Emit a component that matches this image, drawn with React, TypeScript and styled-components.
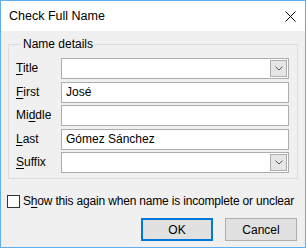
import React from "react";
import styled, { createGlobalStyle } from "styled-components";

const GlobalStyle = createGlobalStyle`
  html, body {
    margin: 0;
    padding: 0;
    background: #ffffff;
  }
  * {
    box-sizing: border-box;
  }
`;

const Window = styled.div`
  width: 306px;
  height: 248px;
  border: 1px solid #62aeea;
  background-color: #f0f0f0;
  font-family: "Liberation Sans", Arial, sans-serif;
  font-size: 12px;
  color: #000000;
  display: flex;
  flex-direction: column;
  overflow: hidden;
`;

const TitleBar = styled.div`
  flex-shrink: 0;
  height: 30px;
  background-color: #ffffff;
  display: flex;
  align-items: center;
  justify-content: space-between;
  padding: 0 9px 0 8px;
`;

const Title = styled.span`
  font-size: 12.5px;
`;

const Body = styled.div`
  flex: 1;
  padding: 6px 7px 0 7px;
  display: flex;
  flex-direction: column;
`;

const Group = styled.fieldset`
  margin: 0;
  border: 1px solid #dcdcdc;
  padding: 6px 8px 5px 7px;
  display: grid;
  grid-template-columns: 45px 1fr;
  row-gap: 2.5px;
  align-items: center;
`;

const Legend = styled.legend`
  padding: 0 2px;
  margin-left: 5px;
  line-height: 15px;
`;

const Label = styled.label`
  line-height: 21px;
  white-space: nowrap;
`;

const Key = styled.span`
  text-decoration: underline;
  text-underline-offset: 2px;
`;

const Field = styled.div`
  position: relative;
  height: 21px;
  border: 1px solid #adadad;
  background-color: #ffffff;
  display: flex;
  align-items: center;
  padding-left: 4px;
`;

const DropButton = styled.div`
  position: absolute;
  top: 1px;
  right: 1px;
  width: 17px;
  height: 17px;
  border: 1px solid #adadad;
  background-color: #e5e5e5;
  display: flex;
  align-items: center;
  justify-content: center;
`;

const CheckRow = styled.div`
  display: flex;
  align-items: center;
  margin-top: 15px;
  margin-left: -1px;
  gap: 3px;
  white-space: nowrap;
  letter-spacing: -0.18px;
`;

const Box = styled.span`
  flex-shrink: 0;
  width: 13px;
  height: 13px;
  border: 1px solid #333333;
  background-color: #ffffff;
`;

const Buttons = styled.div`
  display: flex;
  justify-content: flex-end;
  gap: 12px;
  margin-top: 10px;
  padding-right: 1px;
`;

const Button = styled.div<{ $primary?: boolean }>`
  width: 72px;
  height: 23px;
  display: flex;
  align-items: center;
  justify-content: center;
  background-color: #e1e1e1;
  border: ${(p) => (p.$primary ? "2px solid #0078d7" : "1px solid #adadad")};
`;

const Chevron = () => (
  <svg width="8" height="5" viewBox="0 0 8 5">
    <path d="M0.5 0.7 L4 4 L7.5 0.7" fill="none" stroke="#555555" strokeWidth="1" />
  </svg>
);

const CloseIcon = () => (
  <svg width="11" height="11" viewBox="0 0 11 11">
    <path d="M0.5 0.5 L10.5 10.5 M10.5 0.5 L0.5 10.5" stroke="#000000" strokeWidth="1" />
  </svg>
);

const rows: { label: React.ReactNode; value: string; combo?: boolean }[] = [
  { label: <><Key>T</Key>itle</>, value: "", combo: true },
  { label: <><Key>F</Key>irst</>, value: "José" },
  { label: <>Mi<Key>d</Key>dle</>, value: "" },
  { label: <><Key>L</Key>ast</>, value: "Gómez Sánchez" },
  { label: <><Key>S</Key>uffix</>, value: "", combo: true },
];

const App = () => {
  return (
    <>
      <GlobalStyle />
      <Window>
        <TitleBar>
          <Title>Check Full Name</Title>
          <CloseIcon />
        </TitleBar>
        <Body>
          <Group>
            <Legend>Name details</Legend>
            {rows.map((r, i) => (
              <React.Fragment key={i}>
                <Label>{r.label}</Label>
                <Field>
                  {r.value}
                  {r.combo && (
                    <DropButton>
                      <Chevron />
                    </DropButton>
                  )}
                </Field>
              </React.Fragment>
            ))}
          </Group>
          <CheckRow>
            <Box />
            <span>
              S<Key>h</Key>ow this again when name is incomplete or unclear
            </span>
          </CheckRow>
          <Buttons>
            <Button $primary>OK</Button>
            <Button>Cancel</Button>
          </Buttons>
        </Body>
      </Window>
    </>
  );
};

export default App;
